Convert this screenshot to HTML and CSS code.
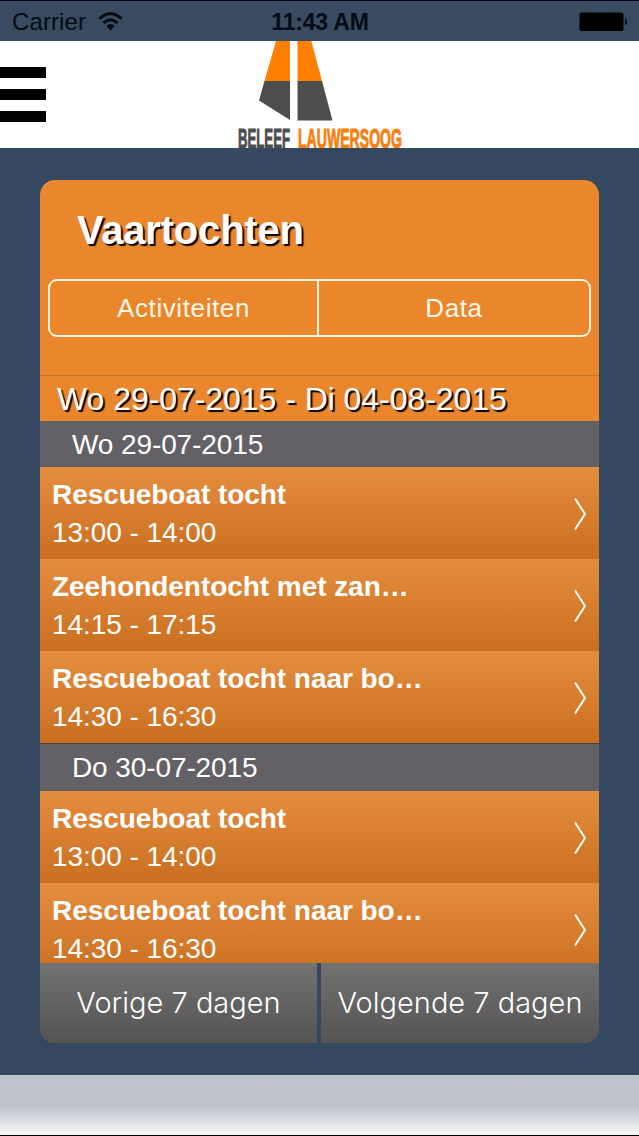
FILE: index.html
```html
<!DOCTYPE html>
<html lang="nl">
<head>
    <meta charset="utf-8">
    <title>Vaartochten</title>
    <link rel="stylesheet" href="styles.css">
</head>
<body>
    <div class="status-bar">
        <div class="carrier">
            <span>Carrier</span>
            <svg width="26" height="20" viewBox="0 0 26 20">
                <path d="M1.5 6.6 Q12.5 -3 23.5 6.6" fill="none" stroke="#050a14" stroke-width="3"/>
                <path d="M5.5 11 Q12.5 4.6 19.5 11" fill="none" stroke="#050a14" stroke-width="3"/>
                <path d="M8.4 14 Q12.5 10.2 16.6 14 L12.5 18.4 Z" fill="#050a14"/>
            </svg>
        </div>
        <div class="time">11:43 AM</div>
        <div class="battery">
            <svg width="50" height="20" viewBox="0 0 50 20">
                <rect x="1.5" y="0.5" width="44" height="18.5" rx="2" fill="#000"/>
                <path d="M47.5 6.5 Q49.5 9.5 47.5 13 Z" fill="#050a14" stroke="#050a14"/>
            </svg>
        </div>
    </div>

    <div class="header">
        <div class="menu">
            <span></span>
            <span></span>
            <span></span>
        </div>
        <svg class="logo" width="170" height="107" viewBox="235 41 170 107">
            <path d="M276 41 H290 V81 H264.5 Z" fill="#ff7f00"/>
            <path d="M297.5 41 H311.3 L322 81 H297.5 Z" fill="#ff7f00"/>
            <path d="M264.5 81 H290 V120 L259 100.5 Z" fill="#4d4d4d"/>
            <path d="M297.5 81 H322 L332.5 120.5 H297.5 Z" fill="#4d4d4d"/>
            <text class="logo-text" x="238" y="148" textLength="52" lengthAdjust="spacingAndGlyphs" fill="#4d4a50" stroke="#4d4a50">BELEEF</text>
            <text class="logo-text" x="298" y="148" textLength="104" lengthAdjust="spacingAndGlyphs" fill="#f77f10" stroke="#f77f10">LAUWERSOOG</text>
        </svg>
    </div>

    <div class="card">
        <h1>Vaartochten</h1>
        <div class="tabs">
            <div class="tab">Activiteiten</div>
            <div class="tab">Data</div>
        </div>
        <div class="range">Wo 29-07-2015 - Di 04-08-2015</div>
        <div class="list">
            <div class="day">Wo 29-07-2015</div>
            <div class="trip">
                <div class="trip-text">
                    <div class="name">Rescueboat tocht</div>
                    <div class="hours">13:00 - 14:00</div>
                </div>
                <svg class="arrow" width="14" height="34" viewBox="0 0 14 34"><path d="M2 1.5 L12 17 L2 32.5"/></svg>
            </div>
            <div class="trip">
                <div class="trip-text">
                    <div class="name">Zeehondentocht met zan…</div>
                    <div class="hours">14:15 - 17:15</div>
                </div>
                <svg class="arrow" width="14" height="34" viewBox="0 0 14 34"><path d="M2 1.5 L12 17 L2 32.5"/></svg>
            </div>
            <div class="trip">
                <div class="trip-text">
                    <div class="name">Rescueboat tocht naar bo…</div>
                    <div class="hours">14:30 - 16:30</div>
                </div>
                <svg class="arrow" width="14" height="34" viewBox="0 0 14 34"><path d="M2 1.5 L12 17 L2 32.5"/></svg>
            </div>
            <div class="day day-next">Do 30-07-2015</div>
            <div class="trip">
                <div class="trip-text">
                    <div class="name">Rescueboat tocht</div>
                    <div class="hours">13:00 - 14:00</div>
                </div>
                <svg class="arrow" width="14" height="34" viewBox="0 0 14 34"><path d="M2 1.5 L12 17 L2 32.5"/></svg>
            </div>
            <div class="trip">
                <div class="trip-text">
                    <div class="name">Rescueboat tocht naar bo…</div>
                    <div class="hours">14:30 - 16:30</div>
                </div>
                <svg class="arrow" width="14" height="34" viewBox="0 0 14 34"><path d="M2 1.5 L12 17 L2 32.5"/></svg>
            </div>
        </div>
        <div class="pager">
            <div class="page-button">Vorige 7 dagen</div>
            <div class="page-button">Volgende 7 dagen</div>
        </div>
    </div>

    <div class="bottom-bar"></div>
</body>
</html>
```
FILE: styles.css
```css
* {
    box-sizing: border-box;
}

body {
    margin: 0;
    width: 639px;
    height: 1136px;
    overflow: hidden;
    background: #34495f;
    color: #fff;
    font-family: "Liberation Sans", Arial, sans-serif;
    white-space: nowrap;
}

.status-bar {
    display: grid;
    grid-template-columns: 1fr auto 1fr;
    align-items: center;
    height: 41px;
    padding: 2px 11px 0 12px;
    border-top: 1px solid #020618;
    background: #384b60;
    color: #050a14;
    font-size: 24px;
}

.carrier {
    display: flex;
    align-items: center;
    gap: 12px;
    letter-spacing: 0.1px;
}

.carrier svg {
    margin-top: -1px;
}

.time {
    font-size: 23px;
    font-weight: 600;
    letter-spacing: -0.2px;
}

.battery {
    display: flex;
    justify-content: flex-end;
}

.header {
    display: grid;
    grid-template-columns: 235px 170px;
    height: 107px;
    background: #fff;
}

.menu {
    display: flex;
    flex-direction: column;
    gap: 11px;
    padding-top: 26px;
}

.menu span {
    width: 45.5px;
    height: 11px;
    background: #000;
}

.logo-text {
    font-family: "Liberation Sans", Arial, sans-serif;
    font-size: 27px;
    font-weight: bold;
    stroke-width: 1px;
}

.card {
    display: flex;
    flex-direction: column;
    width: 559px;
    height: 863px;
    margin: 32px 0 0 40px;
    border-radius: 15px;
    overflow: hidden;
    background: #ea872c;
}

h1 {
    height: 99px;
    margin: 0;
    padding-left: 37px;
    font-size: 40px;
    line-height: 101px;
    letter-spacing: -0.2px;
    text-shadow: 2px 2px 1px #000;
}

.tabs {
    display: grid;
    grid-template-columns: 267px 1fr;
    height: 58px;
    margin: 0 8px 38px;
    border: 2px solid #fff4e0;
    border-radius: 9px;
}

.tab {
    color: #fff8e8;
    font-size: 26px;
    line-height: 55px;
    letter-spacing: 0.6px;
    text-align: center;
}

.tab + .tab {
    border-left: 2px solid #fff4e0;
}

.range {
    height: 46px;
    padding-left: 17px;
    border-top: 1px solid #c4762c;
    font-size: 32px;
    line-height: 46px;
    letter-spacing: -0.05px;
    text-shadow: 2px 2px 1px #000;
}

.list {
    height: 542px;
    overflow: hidden;
}

.day {
    height: 46px;
    padding-left: 32px;
    background: #636166;
    font-size: 28px;
    line-height: 48px;
    letter-spacing: -0.1px;
}

.day-next {
    height: 48px;
    border-top: 1px solid #454549;
}

.trip {
    display: flex;
    justify-content: space-between;
    align-items: center;
    height: 92px;
    padding: 0 12px;
    background: linear-gradient(#e58d3f, #c96f20);
}

.trip-text {
    padding-top: 1px;
    font-size: 28px;
    line-height: 38px;
    letter-spacing: -0.05px;
}

.name {
    font-weight: bold;
}

.arrow {
    margin-top: 2px;
}

.arrow path {
    fill: none;
    stroke: #fff;
    stroke-width: 2;
}

.pager {
    display: grid;
    grid-template-columns: 277px 1fr;
    gap: 4px;
    height: 80px;
    background: #34495f;
}

.page-button {
    background: linear-gradient(#727270, #565355);
    font-family: Inter, "Liberation Sans", sans-serif;
    font-weight: 300;
    font-size: 29px;
    line-height: 80px;
    text-align: center;
}

.bottom-bar {
    height: 61px;
    margin-top: 32px;
    border-bottom: 1px solid #000;
    background: linear-gradient(#bec5ca, #bfc2ca 50%, #cdd0d8 65%, #e2e4e9 82%, #f6f7f4);
}
```
